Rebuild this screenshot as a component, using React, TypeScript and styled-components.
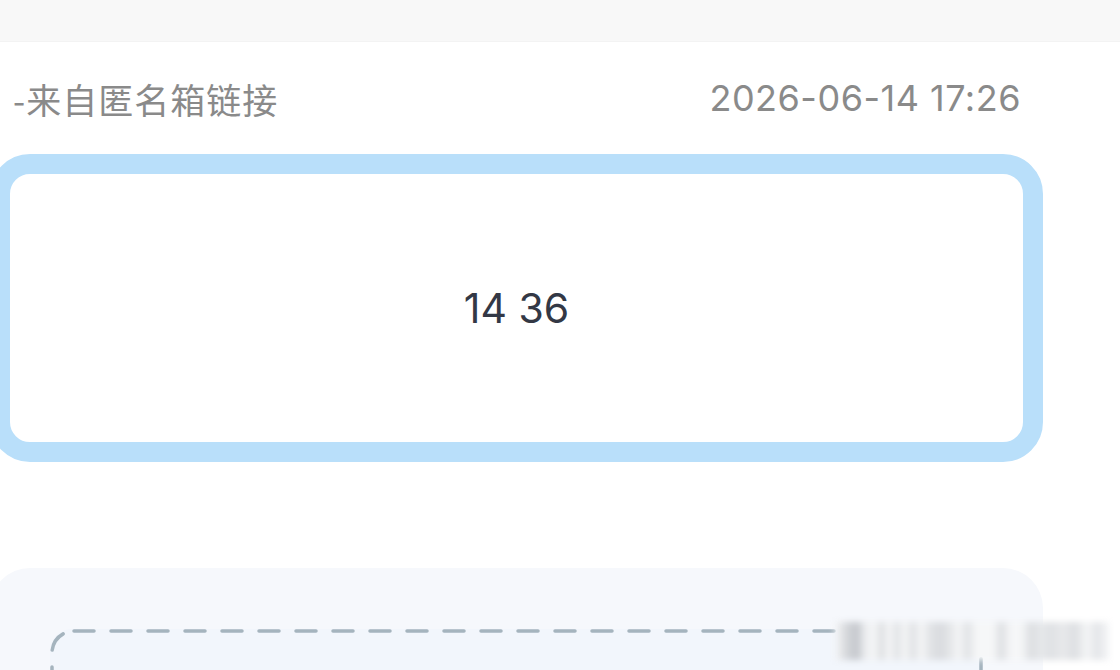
import React from 'react';
import styled, { createGlobalStyle } from 'styled-components';

const GlobalStyle = createGlobalStyle`
  html, body {
    margin: 0;
    padding: 0;
    background: #ffffff;
    overflow: hidden;
  }
  body {
    font-family: Inter, 'Noto Sans CJK SC', sans-serif;
  }
`;

const dashSvg = encodeURIComponent(
  `<svg xmlns='http://www.w3.org/2000/svg' width='100%' height='100%'><rect x='2' y='2' width='calc(100% - 4px)' height='calc(100% - 4px)' rx='22' ry='22' fill='none' stroke='#a5b4be' stroke-width='3.5' stroke-dasharray='20 17' stroke-linecap='round'/></svg>`
);

const App: React.FC = () => {
  return (
    <>
      <GlobalStyle />
      <Screen>
        <TopBar />
        <Page>
          <MetaRow>
            <Source>-来自匿名箱链接</Source>
            <Stamp>2026-06-14 17:26</Stamp>
          </MetaRow>

          <MessageCard>
            <MessageText>14 36</MessageText>
          </MessageCard>

          <ReplyPanel>
            <ReplyBox />
            <BlurStrip />
          </ReplyPanel>
        </Page>
      </Screen>
    </>
  );
};

const Screen = styled.div`
  width: 1120px;
  height: 670px;
  overflow: hidden;
  background: #ffffff;
`;

const TopBar = styled.div`
  height: 42px;
  background: #f8f8f8;
  border-bottom: 1px solid #f3f3f3;
  box-sizing: border-box;
`;

const Page = styled.div`
  width: 1053px;
  margin-left: -10px;
  display: flex;
  flex-direction: column;
`;

const MetaRow = styled.div`
  height: 112px;
  display: flex;
  align-items: center;
  justify-content: space-between;
  padding: 0 22px 0 23px;
`;

const Source = styled.span`
  font-family: 'Noto Sans CJK SC', sans-serif;
  font-size: 35px;
  letter-spacing: 1px;
  color: #8a8a8a;
`;

const Stamp = styled.span`
  font-family: Inter, sans-serif;
  font-size: 36px;
  letter-spacing: 0.5px;
  color: #8a8a8a;
`;

const MessageCard = styled.div`
  height: 308px;
  box-sizing: border-box;
  border: 20px solid #b9dffa;
  border-radius: 40px;
  background: #ffffff;
  display: flex;
  align-items: center;
  justify-content: center;
`;

const MessageText = styled.span`
  font-family: Inter, sans-serif;
  font-size: 41px;
  color: #333845;
`;

const ReplyPanel = styled.div`
  position: relative;
  margin-top: 106px;
  height: 300px;
  background: #f6f8fc;
  border-radius: 40px;
  padding: 61px 60px 0;
  box-sizing: border-box;
`;

const ReplyBox = styled.div`
  height: 220px;
  border-radius: 22px;
  background-color: #f2f6fc;
  background-image: url("data:image/svg+xml,${dashSvg}");
`;

const BlurStrip = styled.div`
  position: absolute;
  left: 845px;
  top: 54px;
  width: 275px;
  height: 38px;
  background:
    linear-gradient(90deg,
      #f6f7f8 0px, #d4d6da 12px, #c4c7cc 22px, #eceef0 30px,
      #f5f6f7 40px, #dcdee1 46px, #f5f6f7 54px,
      #e1e3e6 62px, #f5f6f7 70px, #dfe1e4 78px, #f5f6f7 86px,
      #e0e2e5 96px, #d9dbdf 106px, #e6e8ea 116px, #f5f6f7 124px,
      #e0e2e5 132px, #f6f7f8 142px, #f6f7f8 158px, #dddfe2 166px,
      #f6f7f8 176px, #f6f7f8 186px, #dcdee1 196px, #e6e8ea 206px,
      #dfe1e4 216px, #e8e9eb 228px, #dddfe2 240px, #f5f6f7 252px,
      #e3e5e8 262px, #f8f9fa 275px);
  filter: blur(3px);
`;

export default App;
